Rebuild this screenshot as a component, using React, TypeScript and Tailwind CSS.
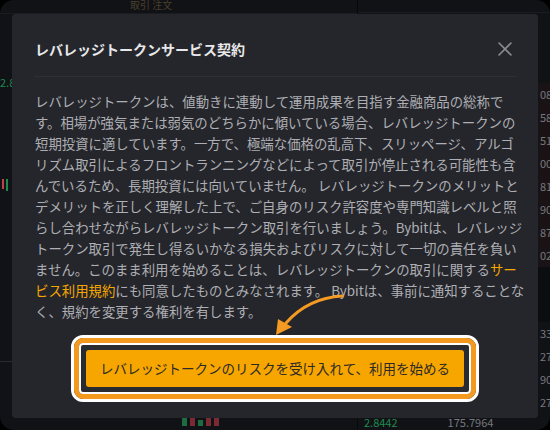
import React from 'react';

const jp = { fontFamily: '"Noto Sans CJK JP", "Noto Sans", sans-serif' };

const bookTop = ['08', '58', '51', '00', '81', '90', '87', '02'];
const bookBottom = ['33', '27', '90', '27'];

function CloseIcon() {
  return (
    <svg width="14" height="14" viewBox="0 0 14 14" className="text-[#8b8c92]">
      <path d="M1 1 L13 13 M13 1 L1 13" stroke="currentColor" strokeWidth="1.6" strokeLinecap="round" />
    </svg>
  );
}

function Arrow() {
  return (
    <svg
      width="90"
      height="50"
      viewBox="0 0 90 50"
      className="pointer-events-none absolute left-[262px] top-[290px]"
    >
      <path d="M80 6 Q46 8 24 33" fill="none" stroke="#f59b23" strokeWidth="3" strokeLinecap="round" />
      <polygon points="14,45 16,29 30,37" fill="#f59b23" />
    </svg>
  );
}

export default function App() {
  return (
    <div className="h-[430px] w-[550px] bg-black" style={jp}>
      <div className="relative h-full w-full overflow-hidden rounded-[14px] bg-[#111216]">
        {/* trading screen behind the dialog */}
        <div className="flex h-full">
          <div className="relative flex-1 border-r border-[#08090b]">
            <div className="h-[14px] border-b border-[#1b1c21] pl-[130px] text-[10px] leading-[10px] text-[#4a3f2c]">
              取引 注文
            </div>
            <div className="mt-[60px] text-[11px] text-[#1f8a4f]">2.8</div>
            <div className="mt-[88px] flex gap-[2px] pl-[2px]">
              <div className="h-[10px] w-[2px] bg-[#c2424c]" />
              <div className="h-[12px] w-[2px] bg-[#1f8a4f]" />
            </div>
            <div className="mt-[170px] h-px w-[12px] bg-[#2a2b30]" />
            <div className="mt-[50px] flex items-end gap-[3px] pl-[182px]">
              <div className="h-[8px] w-[5px] bg-[#1d6b40]" />
              <div className="h-[10px] w-[5px] bg-[#7a2a33]" />
              <div className="h-[6px] w-[5px] bg-[#1d6b40]" />
              <div className="h-[12px] w-[5px] bg-[#7a2a33]" />
              <div className="h-[14px] w-[5px] bg-[#7a2a33]" />
            </div>
          </div>
          <div className="flex w-[192px] flex-col">
            <div className="h-[14px] border-b border-[#1b1c21]" />
            <div className="mt-[70px] flex flex-col bg-[#1a1315] pl-[182px] text-[11px] leading-[23px] text-[#76787e]">
              {bookTop.map((n, i) => (
                <div key={i}>{n}</div>
              ))}
            </div>
            <div className="h-[60px] bg-[#0c0d10]" />
            <div className="flex flex-col pl-[182px] text-[11px] leading-[23px] text-[#76787e]">
              {bookBottom.map((n, i) => (
                <div key={i}>{n}</div>
              ))}
            </div>
            <div className="flex gap-[10px] pl-[6px] text-[11px] text-[#76787e]">
              <span className="text-[#1f8a4f]">2.8442</span>
              <span className="pl-[40px]">175.7964</span>
            </div>
          </div>
        </div>

        {/* dialog */}
        <div className="absolute left-[12px] top-[14px] flex h-[404px] w-[526px] flex-col rounded-[4px] bg-[#25262b]">
          <div className="mx-[22px] flex h-[63px] items-start justify-between border-b border-[#2f3036] pt-[25px]">
            <h2 className="pl-px text-[14px] font-bold leading-[20px] text-[#e8e8ea]">
              レバレッジトークンサービス契約
            </h2>
            <button className="mr-[4px] mt-[3px]">
              <CloseIcon />
            </button>
          </div>

          <p className="whitespace-nowrap pl-[23px] pt-[14px] text-[13.4px] leading-[21px] text-[#aeafb4]">
            レバレッジトークンは、値動きに連動して運用成果を目指す金融商品の総称で<br />
            す。相場が強気または弱気のどちらかに傾いている場合、レバレッジトークンの<br />
            短期投資に適しています。一方で、極端な価格の乱高下、スリッページ、アルゴ<br />
            リズム取引によるフロントランニングなどによって取引が停止される可能性も含<br />
            んでいるため、長期投資には向いていません。 レバレッジトークンのメリットと<br />
            デメリットを正しく理解した上で、ご自身のリスク許容度や専門知識レベルと照<br />
            らし合わせながらレバレッジトークン取引を行いましょう。Bybitは、レバレッジ<br />
            トークン取引で発生し得るいかなる損失およびリスクに対して一切の責任を負い<br />
            ません。このまま利用を始めることは、レバレッジトークンの取引に関する
            <span className="text-[#f7a600]">サー<br />ビス利用規約</span>
            にも同意したものとみなされます。 Bybitは、事前に通知することな<br />
            く、規約を変更する権利を有します。
          </p>

          <div className="mt-[13px] flex justify-center">
            <div className="rounded-[12px] border-[3px] border-white">
              <div className="rounded-[9px] border-[5px] border-[#f39a1e]">
                <div className="rounded-[4px] border-2 border-white bg-[#2a2b30] p-[5px]">
                  <button className="flex h-[37px] w-[378px] items-center justify-center rounded-[3px] bg-[#f7a600] text-[13.5px] text-[#2c2a25]">
                    レバレッジトークンのリスクを受け入れて、利用を始める
                  </button>
                </div>
              </div>
            </div>
          </div>
        </div>

        <Arrow />
      </div>
    </div>
  );
}
